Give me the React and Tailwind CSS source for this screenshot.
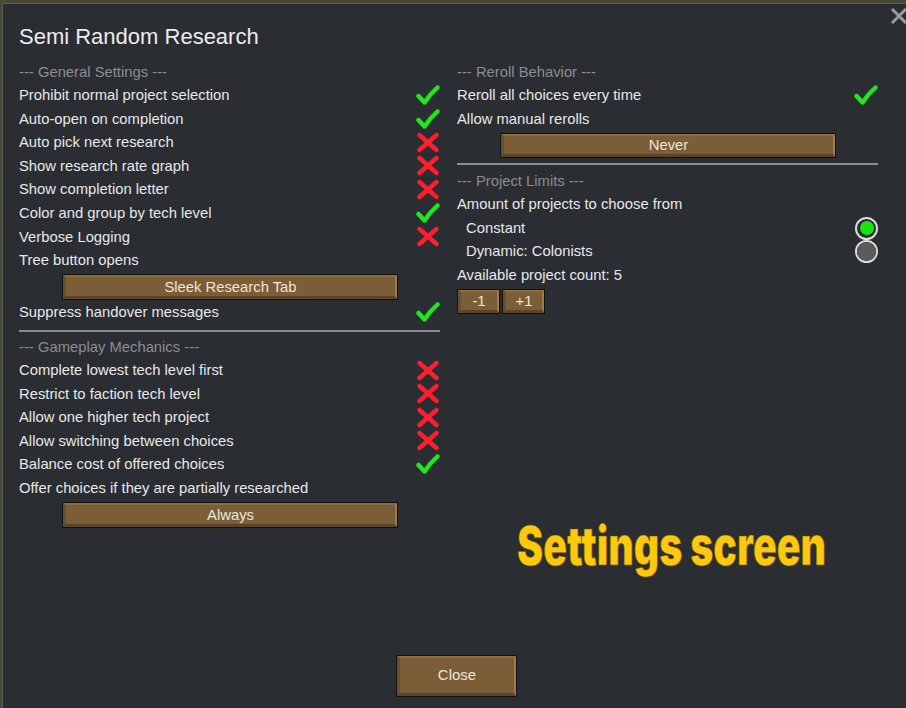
import React from "react";

const FONT = { fontFamily: '"Liberation Sans", Arial, sans-serif' };

function Check() {
  return (
    <svg width="24" height="20" viewBox="0 0 24 20" className="block">
      <path d="M2.5 11 L8.5 17.5 Q14 9 21.5 2.5" fill="none" stroke="#1a7a1a" strokeWidth="5.5" strokeLinecap="round" strokeLinejoin="round" opacity="0.5" />
      <path d="M2.5 11 L8.5 17.5 Q14 9 21.5 2.5" fill="none" stroke="#22e622" strokeWidth="4.2" strokeLinecap="round" strokeLinejoin="round" />
    </svg>
  );
}

function Cross() {
  return (
    <svg width="24" height="21" viewBox="0 0 24 21" className="block">
      <path d="M3.5 3 L20.5 18 M20.5 3 L3.5 18" fill="none" stroke="#ff1e2d" strokeWidth="4.4" strokeLinecap="round" />
    </svg>
  );
}

function Radio({ on }) {
  return (
    <div className="w-[23px] h-[23px] rounded-full border-2 border-[#dcdcdc] bg-[#2b2b2b] flex items-center justify-center">
      {on ? (
        <div className="w-[14px] h-[14px] rounded-full bg-[#14e614]" />
      ) : (
        <div className="w-[19px] h-[19px] rounded-full bg-[#5a5a5a]" />
      )}
    </div>
  );
}

function Row({ label, right }) {
  return (
    <div className="h-[23.55px] flex items-center justify-between text-[14.8px] text-[#e8e8e8] whitespace-nowrap">
      <span>{label}</span>
      {right ? <div className="w-[24px] flex items-center justify-center">{right}</div> : null}
    </div>
  );
}

function RadioRow({ label, on }) {
  return (
    <div className="h-[23.55px] flex items-center justify-between text-[14.8px] text-[#e8e8e8] whitespace-nowrap">
      <span className="pl-[9px]">{label}</span>
      <Radio on={on} />
    </div>
  );
}

function Header({ children }) {
  return (
    <div className="h-[23.55px] flex items-center text-[14.8px] text-[#8b8d90] whitespace-nowrap">{children}</div>
  );
}

function Btn({ className, children, textClass }) {
  return (
    <div className={"border border-[#121212] flex " + className}>
      <div
        className={
          "flex-1 flex items-center justify-center bg-[#7b5e37] border-t-2 border-l-[3px] border-b-[3px] border-r-2 border-t-[#8c6d3e] border-l-[#67502f] border-b-[#5b4428] border-r-[#a07d46] text-[#ebe6da] " +
          (textClass || "text-[14.8px]")
        }
      >
        {children}
      </div>
    </div>
  );
}

export default function App() {
  return (
    <div className="relative w-[906px] h-[708px] overflow-hidden bg-[#4a4836]" style={FONT}>
      <div className="ml-[2px] mt-[3px] w-[940px] h-[705px] border-t border-l border-[#5a5d62] bg-[#2a2d32] pl-[16px] pt-[18px] pb-[11px] flex flex-col">
        <div className="h-[30px] leading-[30px] text-[22px] text-[#ececec] whitespace-nowrap">Semi Random Research</div>

        <div className="mt-[8px] grid grid-cols-[421px_421px] gap-x-[17px] items-start">
          {/* Left column */}
          <div className="flex flex-col">
            <Header>--- General Settings ---</Header>
            <Row label="Prohibit normal project selection" right={<Check />} />
            <Row label="Auto-open on completion" right={<Check />} />
            <Row label="Auto pick next research" right={<Cross />} />
            <Row label="Show research rate graph" right={<Cross />} />
            <Row label="Show completion letter" right={<Cross />} />
            <Row label="Color and group by tech level" right={<Check />} />
            <Row label="Verbose Logging" right={<Cross />} />
            <Row label="Tree button opens" />
            <div className="pt-[2.5px] pl-[43px]">
              <Btn className="w-[336px] h-[26px]">Sleek Research Tab</Btn>
            </div>
            <Row label="Suppress handover messages" right={<Check />} />
            <div className="pt-[6px] pb-[3px]">
              <div className="h-[2px] bg-[#8a8c8f]" />
            </div>
            <Header>--- Gameplay Mechanics ---</Header>
            <Row label="Complete lowest tech level first" right={<Cross />} />
            <Row label="Restrict to faction tech level" right={<Cross />} />
            <Row label="Allow one higher tech project" right={<Cross />} />
            <Row label="Allow switching between choices" right={<Cross />} />
            <Row label="Balance cost of offered choices" right={<Check />} />
            <Row label="Offer choices if they are partially researched" />
            <div className="pt-[2.5px] pl-[43px]">
              <Btn className="w-[336px] h-[26px]">Always</Btn>
            </div>
          </div>

          {/* Right column */}
          <div className="flex flex-col">
            <Header>--- Reroll Behavior ---</Header>
            <Row label="Reroll all choices every time" right={<Check />} />
            <Row label="Allow manual rerolls" />
            <div className="pt-[2px] pl-[43px]">
              <Btn className="w-[336px] h-[25px]">Never</Btn>
            </div>
            <div className="pt-[5.5px] pb-[4px]">
              <div className="h-[2px] bg-[#8a8c8f]" />
            </div>
            <Header>--- Project Limits ---</Header>
            <Row label="Amount of projects to choose from" />
            <RadioRow label="Constant" on />
            <RadioRow label="Dynamic: Colonists" />
            <Row label="Available project count: 5" />
            <div className="pt-[2px] flex gap-[2px]">
              <Btn className="w-[43px] h-[25px]">-1</Btn>
              <Btn className="w-[43px] h-[25px]">+1</Btn>
            </div>
            <div
              className="mt-[205px] ml-[60px] text-[54px] leading-none font-black text-[#fdc80e] whitespace-nowrap origin-left scale-x-[0.728]"
              style={{ fontFamily: 'Inter, "Liberation Sans", sans-serif', WebkitTextStroke: "0.6px #6b5200" }}
            >
              Settings screen
            </div>
          </div>
        </div>

        <div className="mt-auto ml-[377px]">
          <Btn className="w-[121px] h-[42px]" textClass="text-[15px]">Close</Btn>
        </div>
      </div>

      <svg className="absolute left-[890px] top-[7px]" width="18" height="18" viewBox="0 0 18 18">
        <path d="M2 2 L16 16 M16 2 L2 16" stroke="#9c9c9c" strokeWidth="3" fill="none" />
      </svg>
    </div>
  );
}
